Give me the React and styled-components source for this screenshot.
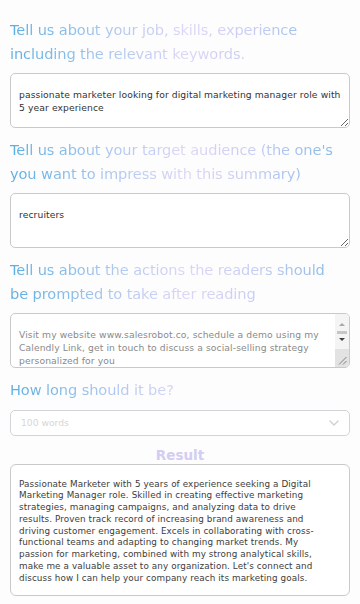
import styled, {createGlobalStyle} from 'styled-components';

const GlobalStyle = createGlobalStyle`
    * {
        box-sizing: border-box;
    }
    body {
        margin: 0;
        background: #fdfdfe;
        font-family: "DejaVu Sans", "Open Sans", sans-serif;
    }
`;

const fields = [
    {
        label: 'Tell us about your job, skills, experience including the relevant keywords.',
        value: 'passionate marketer looking for digital marketing manager role with 5 year experience',
        muted: false,
    },
    {
        label: "Tell us about your target audience (the one's you want to impress with this summary)",
        value: 'recruiters',
        muted: false,
    },
    {
        label: 'Tell us about the actions the readers should be prompted to take after reading',
        value: 'Visit my website www.salesrobot.co, schedule a demo using my Calendly Link, get in touch to discuss a social-selling strategy personalized for you',
        muted: true,
        scroll: true,
    },
];

const result = "Passionate Marketer with 5 years of experience seeking a Digital Marketing Manager role. Skilled in creating effective marketing strategies, managing campaigns, and analyzing data to drive results. Proven track record of increasing brand awareness and driving customer engagement. Excels in collaborating with cross-functional teams and adapting to changing market trends. My passion for marketing, combined with my strong analytical skills, make me a valuable asset to any organization. Let's connect and discuss how I can help your company reach its marketing goals.";

export default function App() {
    return (
        <Page>
            <GlobalStyle />
            {fields.map((field) => (
                <Field key={field.label}>
                    <Label>{field.label}</Label>
                    <TextWrap>
                        <TextBox readOnly value={field.value} muted={field.muted} scroll={field.scroll} />
                        {field.scroll && (
                            <ScrollBar>
                                <ArrowUp />
                                <Thumb />
                                <ArrowDown />
                                <Corner>
                                    <svg width="9" height="9" viewBox="0 0 9 9">
                                        <path d="M8.5 1 L1 8.5 M8.5 5 L5 8.5" stroke="#6a6a6a" strokeWidth="0.8" />
                                    </svg>
                                </Corner>
                            </ScrollBar>
                        )}
                    </TextWrap>
                </Field>
            ))}
            <Field>
                <Label>How long should it be?</Label>
                <SelectBox>
                    <span>100 words</span>
                    <svg width="10" height="6" viewBox="0 0 10 6">
                        <path d="M1 1 L5 5 L9 1" fill="none" stroke="#cfcfcf" strokeWidth="1.3" strokeLinecap="round" strokeLinejoin="round" />
                    </svg>
                </SelectBox>
            </Field>
            <ResultTitle>Result</ResultTitle>
            <ResultBox>{result}</ResultBox>
        </Page>
    );
}

const Page = styled.main`
    padding: 18px 10px 0;
    height: 604px;
    overflow: hidden;
`;

const Field = styled.section`
    display: flex;
    flex-direction: column;
    gap: 8px;
    margin-bottom: 10px;
`;

const Label = styled.h2`
    margin: 0;
    padding-right: 12px;
    font-size: 14.6px;
    font-weight: 400;
    line-height: 23.5px;
    letter-spacing: -0.1px;
    background: linear-gradient(90deg, #5aaee2 0%, #a9c6ee 28%, #ddd6f6 52%, #c6cdf2 72%, #78b6e6 100%);
    -webkit-background-clip: text;
    background-clip: text;
    color: transparent;
`;

const TextWrap = styled.div`
    position: relative;
`;

const TextBox = styled.textarea`
    display: block;
    width: 100%;
    height: 55px;
    margin: 0;
    padding: 14px ${({scroll}) => (scroll ? '18px' : '4px')} 4px 8px;
    border: 1px solid #c9c9cc;
    border-radius: 5px;
    background: #fff;
    font-family: inherit;
    font-size: 9.2px;
    letter-spacing: 0.1px;
    line-height: 13px;
    color: ${({muted}) => (muted ? '#8a8a8a' : '#333')};
    outline: none;
    overflow: hidden;
`;

const ScrollBar = styled.div`
    position: absolute;
    top: 1px;
    right: 1px;
    bottom: 1px;
    width: 14px;
    display: flex;
    flex-direction: column;
    align-items: center;
    background: #f4f4f4;
    border-radius: 0 4px 4px 0;
    overflow: hidden;
`;

const ArrowUp = styled.div`
    margin-top: 9px;
    width: 0;
    height: 0;
    border-left: 3.5px solid transparent;
    border-right: 3.5px solid transparent;
    border-bottom: 3.5px solid #a8a8a8;
`;

const Thumb = styled.div`
    margin-top: 4.5px;
    width: 10px;
    height: 3px;
    background: #c6c6c6;
`;

const ArrowDown = styled.div`
    margin-top: 4.5px;
    width: 0;
    height: 0;
    border-left: 3.5px solid transparent;
    border-right: 3.5px solid transparent;
    border-top: 3.5px solid #404040;
`;

const Corner = styled.div`
    margin-top: auto;
    width: 100%;
    height: 18px;
    display: flex;
    align-items: flex-end;
    justify-content: flex-end;
    padding: 0 2px 2px 0;
    background: #e2e2e2;
`;

const SelectBox = styled.div`
    display: flex;
    align-items: center;
    justify-content: space-between;
    height: 26px;
    padding: 0 10px;
    border: 1px solid #d4d4d8;
    border-radius: 5px;
    background: #fff;
    font-size: 9.2px;
    color: #d6d6d6;
`;

const ResultTitle = styled.h3`
    margin: 0;
    text-align: center;
    font-size: 13.5px;
    font-weight: 600;
    line-height: 18px;
    color: #d2cdf1;
`;

const ResultBox = styled.div`
    padding: 14px 20px 10px 8px;
    border: 1px solid #c9c9cc;
    border-radius: 6px;
    background: #fff;
    font-size: 8.8px;
    letter-spacing: 0.1px;
    line-height: 11.8px;
    color: #3c3c3c;
`;
